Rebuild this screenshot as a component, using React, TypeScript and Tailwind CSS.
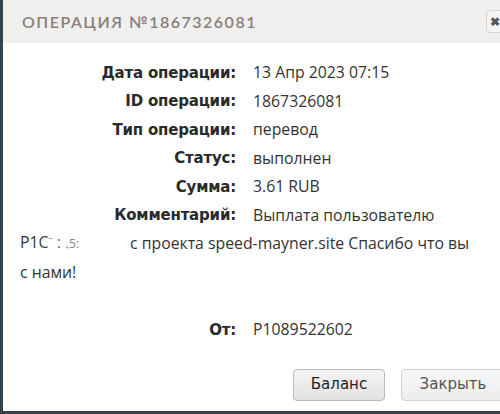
import React from "react";

const labelCls =
  "w-[216px] shrink-0 text-right font-bold text-[#2a2a2a] text-[15px] tracking-[-0.2px]";
const labelFont = { fontFamily: "'DejaVu Sans', Verdana, sans-serif" };

function Row({ label, value }: { label: string; value: string }) {
  return (
    <div className="flex items-center h-[28.4px]">
      <span className={labelCls} style={labelFont}>
        {label}
      </span>
      <span className="ml-[17px] text-[15.8px] text-[#333] whitespace-nowrap">{value}</span>
    </div>
  );
}

export default function App() {
  return (
    <div
      className="w-[500px] h-[414px] overflow-hidden bg-white relative"
      style={{ fontFamily: "'Open Sans', sans-serif" }}
    >
      <div className="w-[540px] h-[411px] border-l-[3px] border-[#34424a] flex flex-col">
        <div className="h-[43px] bg-[#efefef] flex items-center pl-[19px] relative">
          <span
            className="text-[16px] tracking-[1.5px] text-[#8a7e76] font-semibold"
            style={{ fontFamily: "Lato, sans-serif" }}
          >
            ОПЕРАЦИЯ №1867326081
          </span>
          <div className="absolute left-[483px] top-[10px] w-[24px] h-[23px] rounded-[4px] border border-[#d4d4d4] bg-[#f4f4f4] flex items-center justify-start pl-[3px] text-[#555] text-[12px] font-bold">
            ✖
          </div>
        </div>
        <div className="flex-1 bg-white pl-[17px] pt-[16px]">
          <Row label="Дата операции:" value="13 Апр 2023 07:15" />
          <Row label="ID операции:" value="1867326081" />
          <Row label="Тип операции:" value="перевод" />
          <Row label="Статус:" value="выполнен" />
          <Row label="Сумма:" value="3.61 RUB" />
          <div className="text-[15.8px] text-[#333] leading-[28.4px]">
            <div className="flex items-center h-[28.4px]">
              <span className={labelCls} style={labelFont}>
                Комментарий:
              </span>
              <span className="ml-[17px] whitespace-nowrap">Выплата пользователю</span>
            </div>
            <div className="flex items-center h-[28.4px] whitespace-nowrap">
              <span className="w-[110px] shrink-0">
                P1<span className="text-[#444]">C</span>
                <span className="text-[#777] text-[11px] align-top">ˉ</span>
                <span className="text-[#666]"> : </span>
                <span className="text-[#888] text-[12px]">₊5:</span>
              </span>
              <span>с проекта speed-mayner.site Спасибо что вы</span>
            </div>
            <div className="h-[28.4px] flex items-center">с нами!</div>
          </div>
          <div className="flex items-center h-[28.4px] mt-[30px]">
            <span className={labelCls} style={labelFont}>
              От:
            </span>
            <span className="ml-[17px] text-[15.8px] text-[#333]">P1089522602</span>
          </div>
          <div className="flex gap-[16px] pl-[273px] mt-[24px]">
            <button
              className="w-[92px] h-[32px] rounded-[4px] border border-[#b9b9b9] bg-gradient-to-b from-[#f4f4f4] to-[#e2e2e2] text-[15px] text-[#222]"
              style={labelFont}
            >
              Баланс
            </button>
            <button
              className="w-[104px] h-[32px] rounded-[4px] border border-[#d0d0d0] bg-gradient-to-b from-[#f8f8f8] to-[#ececec] text-[15px] text-[#555]"
              style={labelFont}
            >
              Закрыть
            </button>
          </div>
        </div>
      </div>
      <div className="h-[3px] bg-[#3a4146]" />
    </div>
  );
}
